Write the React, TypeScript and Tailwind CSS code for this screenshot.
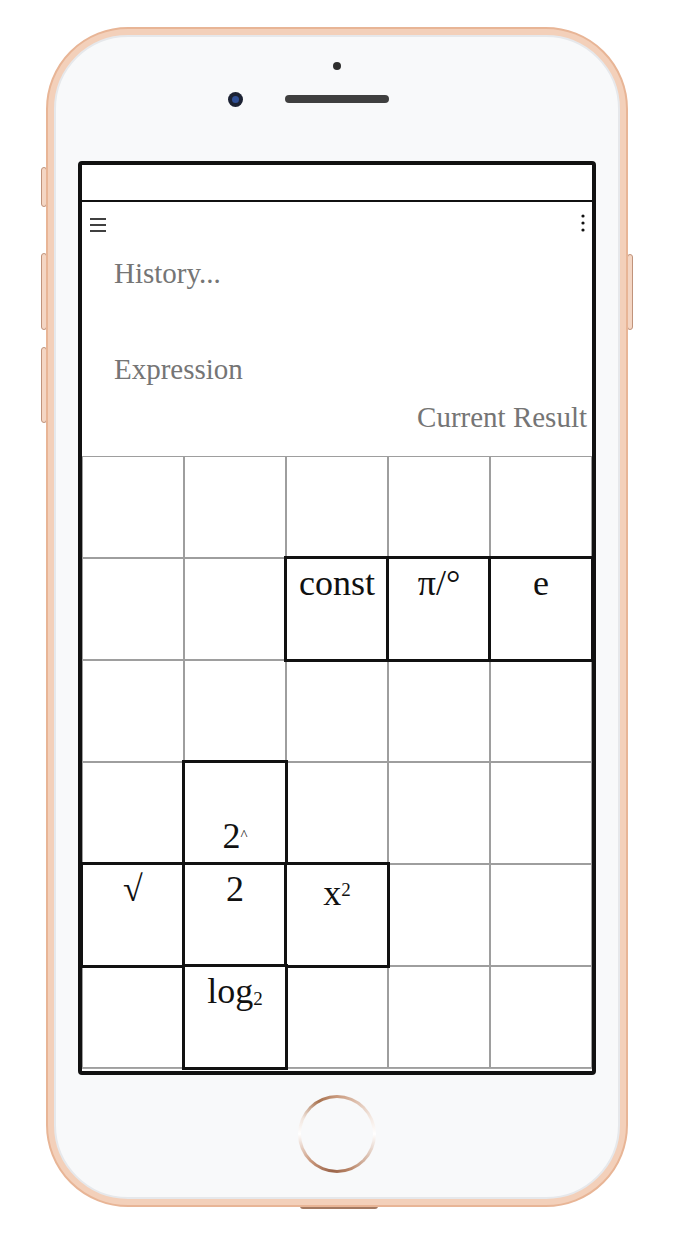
import React from "react";

type Cell = { label?: React.ReactNode; black?: boolean; bottom?: boolean };

const E: Cell = {};

const rows: Cell[][] = [
  [E, E, E, E, E],
  [
    E,
    E,
    { label: "const", black: true },
    { label: "π/°", black: true },
    { label: "e", black: true },
  ],
  [E, E, E, E, E],
  [
    E,
    {
      label: (
        <>
          2<span className="text-[15px] align-[8px]">^</span>
        </>
      ),
      black: true,
      bottom: true,
    },
    E,
    E,
    E,
  ],
  [
    { label: "√", black: true },
    { label: "2", black: true },
    {
      label: (
        <>
          x<span className="text-[19px] align-[9px]">2</span>
        </>
      ),
      black: true,
    },
    E,
    E,
  ],
  [
    E,
    {
      label: (
        <>
          log<span className="text-[19px] align-[-2px]">2</span>
        </>
      ),
      black: true,
    },
    E,
    E,
    E,
  ],
];

function Hamburger() {
  return (
    <svg width="16" height="14" viewBox="0 0 16 14" className="mt-[3px]">
      <line x1="0" y1="1" x2="16" y2="1" stroke="#111" strokeWidth="1.6" />
      <line x1="0" y1="7" x2="16" y2="7" stroke="#111" strokeWidth="1.6" />
      <line x1="0" y1="13" x2="16" y2="13" stroke="#111" strokeWidth="1.6" />
    </svg>
  );
}

function Kebab() {
  return (
    <svg width="4" height="18" viewBox="0 0 4 18" className="mt-[-1px]">
      <circle cx="2" cy="2" r="1.6" fill="#111" />
      <circle cx="2" cy="9" r="1.6" fill="#111" />
      <circle cx="2" cy="16" r="1.6" fill="#111" />
    </svg>
  );
}

export default function App() {
  return (
    <div className="w-[674px] h-[1235px] bg-white overflow-hidden pt-[27px] font-['Liberation_Serif',serif]">
      <div className="relative ml-[46px] w-[582px] h-[1180px]">
        {/* side buttons */}
        <div className="absolute left-[-5px] top-[140px] w-[6px] h-[40px] rounded-[3px] bg-[#f4d6c4] border border-[#c0937b]" />
        <div className="absolute left-[-5px] top-[226px] w-[6px] h-[77px] rounded-[3px] bg-[#f4d6c4] border border-[#c0937b]" />
        <div className="absolute left-[-5px] top-[320px] w-[6px] h-[76px] rounded-[3px] bg-[#f4d6c4] border border-[#c0937b]" />
        <div className="absolute left-[581px] top-[227px] w-[6px] h-[76px] rounded-[3px] bg-[#f4d6c4] border border-[#c0937b]" />
        {/* bottom port */}
        <div className="absolute left-[254px] bottom-[-2px] w-[78px] h-[4px] rounded-b-[3px] bg-[#a47a62]" />

        {/* frame */}
        <div className="relative w-full h-full rounded-[82px] border-[2px] border-[#e8b596] bg-[#f3d0ba] p-[6px]">
          <div className="w-full h-full rounded-[74px] border-[2px] border-[#e6e8eb] bg-[#f8f9fa] flex flex-col">
            {/* sensor */}
            <div className="mx-auto mt-[25px] w-[8px] h-[8px] rounded-full bg-[#2e2e2e]" />
            {/* camera + speaker */}
            <div className="mt-[22px] h-[14px] flex items-center justify-center">
              <div className="w-[15px] h-[15px] rounded-full bg-[#1c2233] flex items-center justify-center">
                <div className="w-[7px] h-[7px] rounded-full bg-[#2f4f95]" />
              </div>
              <div className="ml-[42px] w-[104px] h-[8px] rounded-full bg-[#3f3f3f]" />
              <div className="w-[57px]" />
            </div>

            {/* screen */}
            <div className="ml-[22px] mt-[55px] w-[518px] h-[914px] border-[4px] border-[#111] rounded-[4px] bg-white flex flex-col">
              <div className="h-[37px] border-b-2 border-[#111]" />
              <div className="h-[254px] flex flex-col">
                <div className="flex justify-between items-start pl-[8px] pr-[7px] pt-[13px] h-[31px]">
                  <Hamburger />
                  <Kebab />
                </div>
                <div className="mt-[24px] pl-[32px] text-[29px] leading-[33px] text-[#757575]">History...</div>
                <div className="mt-[63px] pl-[32px] text-[29px] leading-[33px] text-[#757575]">Expression</div>
                <div className="mt-[15px] pr-[5px] text-right text-[29px] leading-[33px] text-[#757575]">Current Result</div>
              </div>
              <div className="grid grid-cols-5">
                {rows.flat().map((c, i) => (
                  <div
                    key={i}
                    className={
                      c.black
                        ? "relative z-10 h-[102px] border border-[#111] shadow-[0_0_0_2px_#111] bg-white flex flex-col items-center text-[36px] leading-[41px] text-[#111] " +
                          (c.bottom ? "justify-end pb-[6px]" : "justify-start pt-[4px]")
                        : "h-[102px] border border-[#9e9e9e] bg-white"
                    }
                  >
                    {c.label ? <span className="whitespace-nowrap">{c.label}</span> : null}
                  </div>
                ))}
              </div>
              <div className="h-[1px] bg-[#a8a8a8]" />
            </div>

            {/* home button */}
            <div className="mx-auto mt-[20px] w-[78px] h-[78px] rounded-full p-[3px] bg-[conic-gradient(from_0deg,#c99a7e,#f4e9e2_18%,#ffffff_25%,#b88466_45%,#9a6449_52%,#c8967a_62%,#ffffff_75%,#f0e4dc_82%,#a8724f_92%,#c99a7e)]">
              <div className="w-full h-full rounded-full bg-[#f8f9fa]" />
            </div>
          </div>
        </div>
      </div>
    </div>
  );
}
